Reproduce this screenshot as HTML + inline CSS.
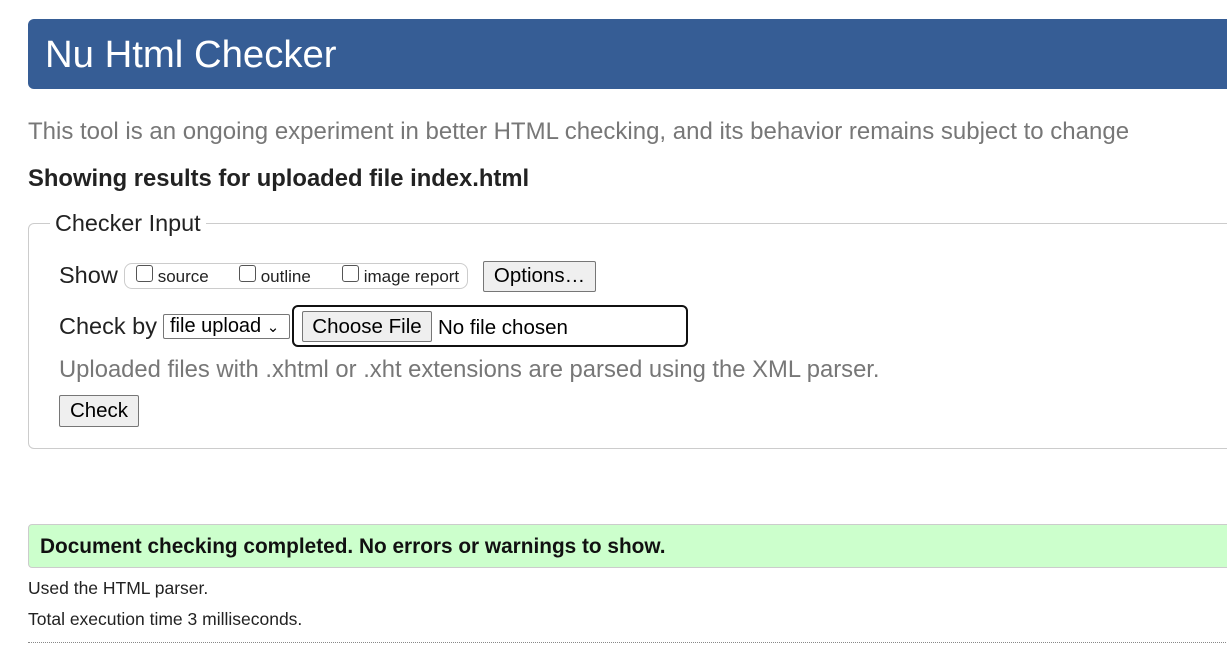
<!DOCTYPE html>
<html><head><meta charset="utf-8"><style>
*{box-sizing:border-box;margin:0;padding:0}
body{width:1227px;height:649px;overflow:hidden;background:#fff;font-family:"Liberation Sans",Arial,sans-serif;color:#222;position:relative}
.a{position:absolute;white-space:nowrap}
.btn{position:absolute;background:#efefef;border:1px solid #767676;border-radius:2px;color:#000;font-size:20.5px;text-align:center}
.cb{display:inline-block;width:17px;height:17px;border:1px solid #555;border-radius:3px;vertical-align:0px;background:#fff}
</style></head><body>
<div class="a" style="left:28px;top:19px;width:1220px;height:70px;background:#365d95;border-radius:6px"></div>
<div class="a" style="left:45px;top:33px;font-size:38.3px;color:#fff">Nu Html Checker</div>
<div class="a" style="left:28px;top:118px;font-size:24px;color:#777">This tool is an ongoing experiment in better HTML checking, and its behavior remains subject to change</div>
<div class="a" style="left:28px;top:165px;font-size:23.8px;font-weight:bold;color:#222">Showing results for uploaded file index.html</div>
<div class="a" style="left:28px;top:223px;width:1220px;height:226px;border:1px solid #ccc;border-radius:6px"></div>
<div class="a" style="left:50px;top:210px;background:#fff;padding:0 5px;font-size:23.4px;color:#222">Checker Input</div>
<div class="a" style="left:59px;top:262px;font-size:23.5px">Show</div>
<div class="a" style="left:124px;top:263px;width:344px;height:26px;border:1px solid #ccc;border-radius:8px"></div>
<div class="a" style="left:136px;top:265px;font-size:17px"><span class="cb"></span> source</div>
<div class="a" style="left:239px;top:265px;font-size:17px"><span class="cb"></span> outline</div>
<div class="a" style="left:342px;top:265px;font-size:17px"><span class="cb"></span> image report</div>
<div class="btn" style="left:483px;top:261px;width:113px;height:31px;line-height:28px">Options…</div>
<div class="a" style="left:59px;top:313px;font-size:23.5px">Check by</div>
<div class="a" style="left:163px;top:314px;width:127px;height:25px;border:1px solid #767676;border-radius:2px;font-size:20px;color:#000;padding-left:6px;line-height:22px">file upload <span style="font-size:15px">⌄</span></div>
<div class="a" style="left:292px;top:305px;width:396px;height:42px;border:2px solid #111;border-radius:6px"></div>
<div class="btn" style="left:302px;top:311px;width:130px;height:31px;line-height:29px">Choose File</div>
<div class="a" style="left:438px;top:316px;font-size:20.5px;color:#000">No file chosen</div>
<div class="a" style="left:59px;top:356px;font-size:23.8px;color:#777">Uploaded files with .xhtml or .xht extensions are parsed using the XML parser.</div>
<div class="btn" style="left:59px;top:395px;width:80px;height:32px;line-height:29px">Check</div>
<div class="a" style="left:28px;top:524px;width:1220px;height:44px;background:#ccffcc;border:1px solid #ccc;border-radius:4px"></div>
<div class="a" style="left:40px;top:535px;font-size:20.8px;font-weight:bold;color:#111">Document checking completed. No errors or warnings to show.</div>
<div class="a" style="left:28px;top:578px;font-size:17.5px">Used the HTML parser.</div>
<div class="a" style="left:28px;top:609px;font-size:17.5px">Total execution time 3 milliseconds.</div>
<div class="a" style="left:28px;top:642px;width:1220px;border-top:1px dotted #888"></div>
</body></html>
